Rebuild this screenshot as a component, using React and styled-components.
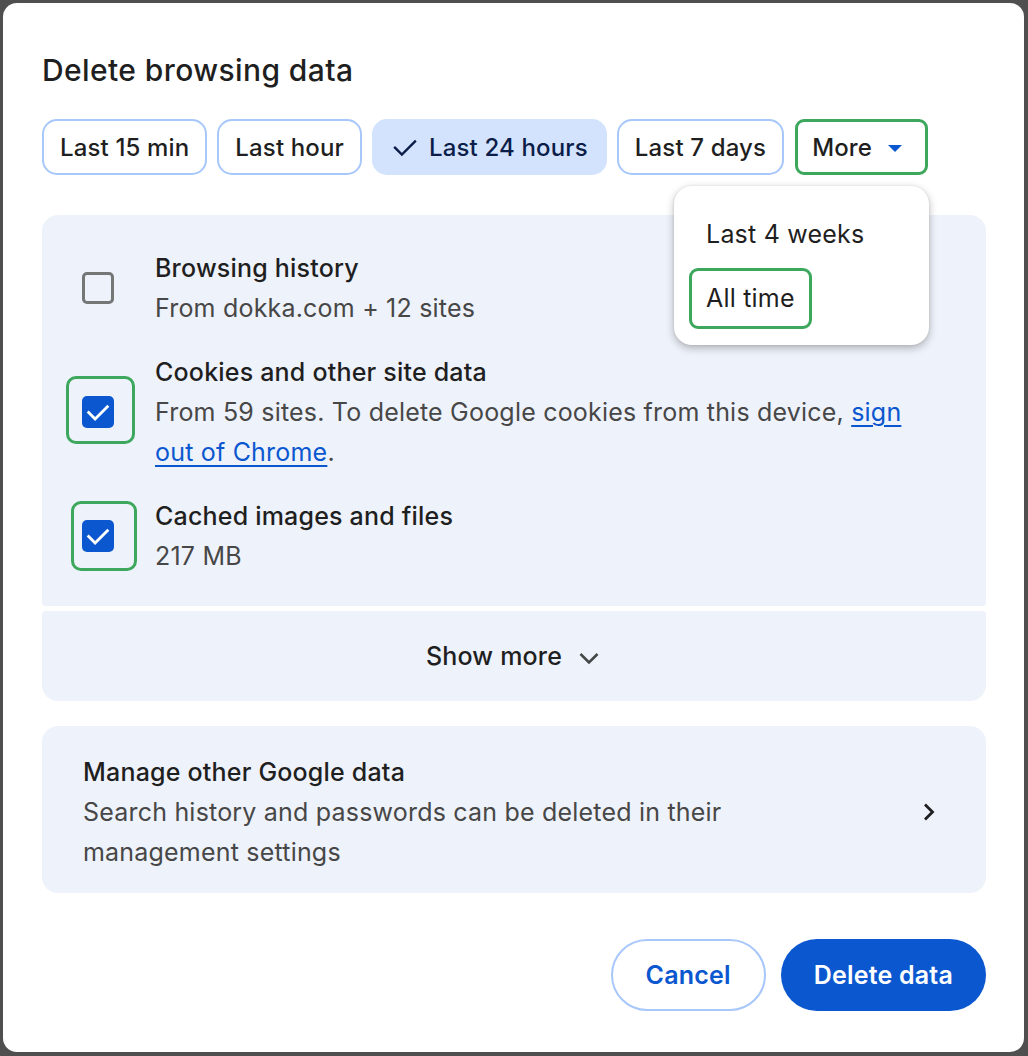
import styled, { createGlobalStyle } from 'styled-components';

const GlobalStyle = createGlobalStyle`
	html, body {
		margin: 0;
		padding: 0;
		background: #4f4f4f;
	}
	body {
		font-family: Inter, "Noto Sans", "Liberation Sans", sans-serif;
		-webkit-font-smoothing: antialiased;
	}
`;

const CheckIcon = ({ color = '#fff', size = 28, width = 2.4 }) => (
	<svg width={size} height={size} viewBox="0 0 24 24" fill="none">
		<path d="M4 12.5 L9.5 18 L20 7.5" stroke={color} strokeWidth={width} strokeLinecap="square" />
	</svg>
);

const ranges = ['Last 15 min', 'Last hour', 'Last 24 hours', 'Last 7 days'];

const App = () => {
	return (
		<>
			<GlobalStyle />
			<Page>
				<Dialog>
					<Title>Delete browsing data</Title>
					<Chips>
						{ranges.map((r) => (
							<Chip key={r} selected={r === 'Last 24 hours'}>
								{r === 'Last 24 hours' && <CheckIcon color="#0b1d48" size={30} width={1.9} />}
								{r}
							</Chip>
						))}
						<MoreWrap>
							<Chip highlighted>
								More
								<Caret />
							</Chip>
							<Menu>
								<MenuItem>Last 4 weeks</MenuItem>
								<MenuItem marked>
									<MenuMark>All time</MenuMark>
								</MenuItem>
							</Menu>
						</MoreWrap>
					</Chips>

					<DataCard>
						<Row>
							<BoxWrap>
								<Checkbox />
							</BoxWrap>
							<RowText>
								<RowTitle>Browsing history</RowTitle>
								<RowSub>From dokka.com + 12 sites</RowSub>
							</RowText>
						</Row>
						<Row>
							<BoxWrap>
								<Checkbox checked>
									<CheckIcon />
								</Checkbox>
								<Mark top={-20} right={-21} bottom={-16} left={-16} />
							</BoxWrap>
							<RowText>
								<RowTitle>Cookies and other site data</RowTitle>
								<RowSub>
									From 59 sites. To delete Google cookies from this device, <Link>sign out of Chrome</Link>.
								</RowSub>
							</RowText>
						</Row>
						<Row>
							<BoxWrap>
								<Checkbox checked>
									<CheckIcon />
								</Checkbox>
								<Mark top={-19} right={-23} bottom={-19} left={-11} />
							</BoxWrap>
							<RowText>
								<RowTitle>Cached images and files</RowTitle>
								<RowSub>217 MB</RowSub>
							</RowText>
						</Row>
					</DataCard>
					<ShowMore>
						Show more
						<svg width="26" height="26" viewBox="0 0 26 26" fill="none">
							<path d="M4.5 9 L13 17.5 L21.5 9" stroke="#444746" strokeWidth="2.6" />
						</svg>
					</ShowMore>

					<ManageCard>
						<ManageText>
							<RowTitle>Manage other Google data</RowTitle>
							<RowSub>Search history and passwords can be deleted in their management settings</RowSub>
						</ManageText>
						<svg width="24" height="24" viewBox="0 0 24 24" fill="none">
							<path d="M8 4.5 L15.5 12 L8 19.5" stroke="#1f1f1f" strokeWidth="2.8" />
						</svg>
					</ManageCard>

					<Actions>
						<Button>Cancel</Button>
						<Button primary>Delete data</Button>
					</Actions>
				</Dialog>
			</Page>
		</>
	);
};

const Page = styled.div`
	width: 1028px;
	height: 1056px;
	padding: 3px 4px 4px 3px;
	box-sizing: border-box;
`;

const Dialog = styled.div`
	height: 100%;
	box-sizing: border-box;
	background: #fff;
	border-radius: 14px;
	padding: 48px 38px 0 39px;
	display: flex;
	flex-direction: column;
`;

const Title = styled.h1`
	margin: 0;
	font-size: 30px;
	line-height: 38px;
	font-weight: 500;
	color: #1f1f1f;
	letter-spacing: 0.4px;
`;

const Chips = styled.div`
	display: flex;
	gap: 10px;
	margin-top: 30px;
`;

const Chip = styled.div`
	height: 56px;
	box-sizing: border-box;
	display: flex;
	align-items: center;
	gap: ${(p) => (p.selected ? '9px' : '0')};
	padding: ${(p) => (p.selected ? '0 17px 0 16px' : p.highlighted ? '0 23px 0 14px' : '0 16px')};
	border-radius: ${(p) => (p.highlighted ? '9px' : '15px')};
	border: ${(p) =>
		p.selected ? '2px solid #d3e3fd' : p.highlighted ? '3px solid #3da85d' : '2px solid #a8c7fa'};
	background: ${(p) => (p.selected ? '#d3e3fd' : '#fff')};
	color: ${(p) => (p.selected ? '#0b1d48' : '#1f1f1f')};
	font-size: 24px;
	font-weight: 500;
	letter-spacing: 0.15px;
	white-space: nowrap;
`;

const Caret = styled.span`
	width: 0;
	height: 0;
	margin-left: 16px;
	margin-top: 2px;
	border-left: 7px solid transparent;
	border-right: 7px solid transparent;
	border-top: 7px solid #0b57d0;
`;

const MoreWrap = styled.div`
	position: relative;
	margin-left: 1px;
`;

const Menu = styled.div`
	position: absolute;
	top: 67px;
	right: -1px;
	width: 255px;
	box-sizing: border-box;
	padding: 16px 0 15px;
	background: #fff;
	border-radius: 18px;
	box-shadow: 0 3px 8px rgba(0, 0, 0, 0.28), 0 0 3px rgba(0, 0, 0, 0.08);
	z-index: 2;
`;

const MenuItem = styled.div`
	height: 64px;
	display: flex;
	align-items: center;
	padding-left: ${(p) => (p.marked ? '15px' : '32px')};
	font-size: 25px;
	letter-spacing: 0.2px;
	color: #1f1f1f;
`;

const MenuMark = styled.span`
	display: flex;
	align-items: center;
	height: 61px;
	box-sizing: border-box;
	padding: 0 14px;
	border: 3px solid #3da85d;
	border-radius: 9px;
`;

const DataCard = styled.div`
	margin-top: 40px;
	background: #eef2fa;
	border-radius: 16px 16px 4px 4px;
	padding: 33px 40px 30px 40px;
	display: flex;
	flex-direction: column;
	gap: 24px;
`;

const Row = styled.div`
	display: flex;
	align-items: center;
	gap: 41px;
`;

const BoxWrap = styled.div`
	position: relative;
	flex: none;
	width: 32px;
	height: 32px;
`;

const Checkbox = styled.div`
	width: 32px;
	height: 32px;
	box-sizing: border-box;
	border-radius: 5px;
	border: ${(p) => (p.checked ? 'none' : '3px solid #747775')};
	background: ${(p) => (p.checked ? '#0b57d0' : 'transparent')};
	display: flex;
	align-items: center;
	justify-content: center;
`;

const Mark = styled.div`
	position: absolute;
	top: ${(p) => p.top}px;
	right: ${(p) => p.right}px;
	bottom: ${(p) => p.bottom}px;
	left: ${(p) => p.left}px;
	border: 3px solid #3da85d;
	border-radius: 10px;
`;

const RowText = styled.div`
	flex: 1;
	display: flex;
	flex-direction: column;
`;

const RowTitle = styled.div`
	font-size: 25px;
	line-height: 40px;
	font-weight: 500;
	letter-spacing: 0.2px;
	color: #1f1f1f;
`;

const RowSub = styled.div`
	font-size: 25px;
	line-height: 40px;
	letter-spacing: 0.2px;
	color: #474747;
`;

const Link = styled.a`
	color: #0b57d0;
	text-decoration: underline;
	text-underline-offset: 4px;
	text-decoration-thickness: 2px;
`;

const ShowMore = styled.div`
	margin-top: 5px;
	height: 90px;
	background: #eef2fa;
	border-radius: 4px 4px 16px 16px;
	display: flex;
	align-items: center;
	justify-content: center;
	gap: 14px;
	font-size: 25px;
	font-weight: 500;
	letter-spacing: 0.2px;
	color: #1f1f1f;
	svg {
		margin-top: 3px;
	}
`;

const ManageCard = styled.div`
	margin-top: 25px;
	background: #eef2fa;
	border-radius: 16px;
	padding: 26px 45px 21px 41px;
	display: flex;
	align-items: center;
	justify-content: space-between;
`;

const ManageText = styled.div`
	max-width: 720px;
	display: flex;
	flex-direction: column;
`;

const Actions = styled.div`
	margin-top: 46px;
	display: flex;
	justify-content: flex-end;
	gap: 15px;
`;

const Button = styled.button`
	height: 72px;
	box-sizing: border-box;
	padding: 0 33px;
	border-radius: 36px;
	border: ${(p) => (p.primary ? 'none' : '2px solid #a8c7fa')};
	background: ${(p) => (p.primary ? '#0b57d0' : '#fff')};
	color: ${(p) => (p.primary ? '#fff' : '#0b57d0')};
	font-family: inherit;
	font-size: 25px;
	font-weight: 600;
	letter-spacing: 0.2px;
`;

export default App;
